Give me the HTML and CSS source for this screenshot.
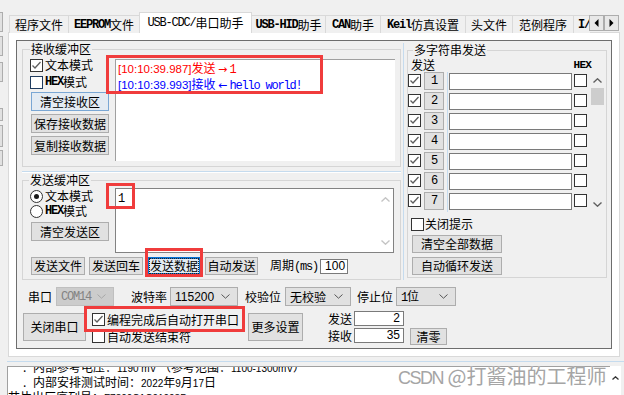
FILE: index.html
```html
<!DOCTYPE html>
<html lang="zh-CN">

<head>
    <meta charset="UTF-8">
    <title>USB-CDC/串口助手</title>
    <link rel="stylesheet" href="styles.css">
</head>

<body>

    <div class="app">
        <!-- 左侧被遮住的按钮边缘 -->
        <div class="edge">
            <div class="stub s1"></div>
            <div class="stub s2"></div>
            <div class="stub s3"></div>
            <div class="stub s4"></div>
            <div class="stub s5"></div>
            <div class="stub s6"></div>
        </div>

        <div class="main">
            <div class="tabs">
                <div class="tab t1">程序文件</div>
                <div class="tab t2"><span class="m b">EEPROM</span>文件</div>
                <div class="tab t3 active"><span class="m">USB-CDC/</span>串口助手</div>
                <div class="tab t4"><span class="m b">USB-HID</span>助手</div>
                <div class="tab t5"><span class="m b">CAN</span>助手</div>
                <div class="tab t6"><span class="m b">Keil</span>仿真设置</div>
                <div class="tab t7">头文件</div>
                <div class="tab t8">范例程序</div>
                <div class="tab t9"><span class="m b">I/</span></div>
                <div class="tab-arrows">
                    <span class="arr"><svg width="5" height="8" viewBox="0 0 5 8"><polygon points="4.5,0 4.5,8 0.5,4" fill="#000"/></svg></span>
                    <span class="arr"><svg width="5" height="8" viewBox="0 0 5 8"><polygon points="0.5,0 0.5,8 4.5,4" fill="#000"/></svg></span>
                </div>
            </div>

            <div class="panel">
                <div class="frame">
                    <div class="top">
                        <div class="left-col">
                            <fieldset class="grp recv">
                                <legend>接收缓冲区</legend>
                                <div class="grp-body">
                                    <div class="ctrls">
                                        <div class="chk-row r1">
                                            <span class="cb"><svg width="11" height="11" viewBox="0 0 11 11"><polyline points="1.5,5.5 4,8 9.5,2" fill="none" stroke="#5f5f5f" stroke-width="1.3"/></svg></span>文本模式
                                        </div>
                                        <div class="chk-row r2"><span class="cb hov"></span><span class="m b">HEX</span>模式</div>
                                        <div class="btn side-btn def">清空接收区</div>
                                        <div class="btn side-btn">保存接收数据</div>
                                        <div class="btn side-btn">复制接收数据</div>
                                    </div>
                                    <div class="recv-box">
                                        <div class="line red"><span class="ts">[10:10:39.987]</span>发送<span class="ar">→</span><span class="m">1</span></div>
                                        <div class="line blue"><span class="ts">[10:10:39.993]</span>接收<span class="ar">←</span><span class="m">hello world!</span></div>
                                    </div>
                                </div>
                            </fieldset>

                            <div class="hsep"></div>

                            <fieldset class="grp send">
                                <legend>发送缓冲区</legend>
                                <div class="grp-body">
                                    <div class="ctrls">
                                        <div class="chk-row r1"><span class="rb"><i></i></span>文本模式</div>
                                        <div class="chk-row r2"><span class="rb"></span><span class="m b">HEX</span>模式</div>
                                        <div class="btn side-btn">清空发送区</div>
                                    </div>
                                    <div class="send-box">
                                        <div class="send-text"><span class="m">1</span></div>
                                        <div class="dis-scroll">
                                            <svg width="9" height="5" viewBox="0 0 9 5"><polyline points="0.5,4.5 4.5,0.8 8.5,4.5" fill="none" stroke="#c4c4c4" stroke-width="1.4"/></svg>
                                            <svg width="9" height="5" viewBox="0 0 9 5"><polyline points="0.5,0.5 4.5,4.2 8.5,0.5" fill="none" stroke="#c4c4c4" stroke-width="1.4"/></svg>
                                        </div>
                                    </div>
                                </div>
                                <div class="send-bar">
                                    <div class="btn sb w54">发送文件</div>
                                    <div class="btn sb w54">发送回车</div>
                                    <div class="btn sb w54 focus"><span>发送数据</span></div>
                                    <div class="btn sb w53">自动发送</div>
                                    <span class="period">周期<span class="m">(ms)</span></span>
                                    <div class="period-in">100</div>
                                </div>
                            </fieldset>
                        </div>

                        <div class="vsep"></div>

                        <fieldset class="grp multi">
                            <legend>多字符串发送</legend>
                            <div class="multi-head">发送<span class="m b hex-h">HEX</span></div>
                            <div class="rows">
                                <div class="row-list">
                                    <div class="row"><span class="cb"><svg width="11" height="11" viewBox="0 0 11 11"><polyline points="1.5,5.5 4,8 9.5,2" fill="none" stroke="#5f5f5f" stroke-width="1.3"/></svg></span><div class="btn num"><span class="m">1</span></div><i class="vl"></i><div class="txt"></div><span class="cb hx"></span></div>
                                    <div class="row"><span class="cb"><svg width="11" height="11" viewBox="0 0 11 11"><polyline points="1.5,5.5 4,8 9.5,2" fill="none" stroke="#5f5f5f" stroke-width="1.3"/></svg></span><div class="btn num"><span class="m">2</span></div><i class="vl"></i><div class="txt"></div><span class="cb hx"></span></div>
                                    <div class="row"><span class="cb"><svg width="11" height="11" viewBox="0 0 11 11"><polyline points="1.5,5.5 4,8 9.5,2" fill="none" stroke="#5f5f5f" stroke-width="1.3"/></svg></span><div class="btn num"><span class="m">3</span></div><i class="vl"></i><div class="txt"></div><span class="cb hx"></span></div>
                                    <div class="row"><span class="cb"><svg width="11" height="11" viewBox="0 0 11 11"><polyline points="1.5,5.5 4,8 9.5,2" fill="none" stroke="#5f5f5f" stroke-width="1.3"/></svg></span><div class="btn num"><span class="m">4</span></div><i class="vl"></i><div class="txt"></div><span class="cb hx"></span></div>
                                    <div class="row"><span class="cb"><svg width="11" height="11" viewBox="0 0 11 11"><polyline points="1.5,5.5 4,8 9.5,2" fill="none" stroke="#5f5f5f" stroke-width="1.3"/></svg></span><div class="btn num"><span class="m">5</span></div><i class="vl"></i><div class="txt"></div><span class="cb hx"></span></div>
                                    <div class="row"><span class="cb"><svg width="11" height="11" viewBox="0 0 11 11"><polyline points="1.5,5.5 4,8 9.5,2" fill="none" stroke="#5f5f5f" stroke-width="1.3"/></svg></span><div class="btn num"><span class="m">6</span></div><i class="vl"></i><div class="txt"></div><span class="cb hx"></span></div>
                                    <div class="row"><span class="cb"><svg width="11" height="11" viewBox="0 0 11 11"><polyline points="1.5,5.5 4,8 9.5,2" fill="none" stroke="#5f5f5f" stroke-width="1.3"/></svg></span><div class="btn num"><span class="m">7</span></div><i class="vl"></i><div class="txt"></div><span class="cb hx"></span></div>
                                </div>
                                <div class="vscroll">
                                    <div class="vs-btn"><svg width="9" height="5" viewBox="0 0 9 5"><polyline points="0.5,4.5 4.5,0.8 8.5,4.5" fill="none" stroke="#606060" stroke-width="1.4"/></svg></div>
                                    <div class="thumb"></div>
                                    <div class="vs-btn vs-down"><svg width="9" height="5" viewBox="0 0 9 5"><polyline points="0.5,0.5 4.5,4.2 8.5,0.5" fill="none" stroke="#606060" stroke-width="1.4"/></svg></div>
                                </div>
                            </div>
                            <div class="tip"><span class="cb"></span>关闭提示</div>
                            <div class="btn mbtn">清空全部数据</div>
                            <div class="btn mbtn">自动循环发送</div>
                        </fieldset>
                    </div>

                    <div class="row1">
                        <span>串口</span>
                        <div class="sel dis sel-com"><span class="m">COM14</span><svg width="9" height="5" viewBox="0 0 9 5"><polyline points="0.5,0.5 4.5,4.2 8.5,0.5" fill="none" stroke="#a8a8a8"/></svg></div>
                        <span>波特率</span>
                        <div class="sel sel-baud"><span class="n">115200</span><svg width="9" height="5" viewBox="0 0 9 5"><polyline points="0.5,0.5 4.5,4.2 8.5,0.5" fill="none" stroke="#555"/></svg></div>
                        <span>校验位</span>
                        <div class="sel sel-par"><span>无校验</span><svg width="9" height="5" viewBox="0 0 9 5"><polyline points="0.5,0.5 4.5,4.2 8.5,0.5" fill="none" stroke="#555"/></svg></div>
                        <span>停止位</span>
                        <div class="sel sel-stop"><span><span class="m">1</span>位</span><svg width="9" height="5" viewBox="0 0 9 5"><polyline points="0.5,0.5 4.5,4.2 8.5,0.5" fill="none" stroke="#555"/></svg></div>
                    </div>

                    <div class="row2">
                        <div class="btn bigbtn close-btn">关闭串口</div>
                        <div class="opts">
                            <div class="opt"><span class="cb"><svg width="11" height="11" viewBox="0 0 11 11"><polyline points="1.5,5.5 4,8 9.5,2" fill="none" stroke="#5f5f5f" stroke-width="1.3"/></svg></span>编程完成后自动打开串口</div>
                            <div class="opt"><span class="cb"></span>自动发送结束符</div>
                        </div>
                        <div class="btn bigbtn more-btn">更多设置</div>
                        <div class="cnts">
                            <div class="cnt"><span class="cnt-l">发送</span><div class="cnt-in">2</div></div>
                            <div class="cnt"><span class="cnt-l">接收</span><div class="cnt-in">35</div></div>
                        </div>
                        <div class="btn clr-btn">清零</div>
                    </div>
                </div>
            </div>

            <div class="logsep"></div>
            <div class="log">
                <div class="log-box">
                    <div class="log-in">
                        <div class="log-line ind"><span class="dot">.</span>内部参考电压：<span class="n sm">1190 mV</span> （参考范围：<span class="n sm">1100-1300mV</span>）</div>
                        <div class="log-line ind"><span class="dot">.</span>内部安排测试时间：<span class="n sm">2022</span>年<span class="n sm">9</span>月<span class="n sm">17</span>日</div>
                        <div class="log-line">芯片出厂序列号：<span class="n sm">F7800C1C01003D</span></div>
                    </div>
                </div>
                <div class="log-scroll"><svg width="7" height="4" viewBox="0 0 7 4"><polyline points="0.5,3.5 3.5,0.8 6.5,3.5" fill="none" stroke="#333" stroke-width="1.3"/></svg></div>
            </div>
        </div>
    </div>

    <!-- 标注框 -->
    <div class="mark mk1"></div>
    <div class="mark mk2"></div>
    <div class="mark mk3"></div>
    <div class="mark mk4"></div>

    <div class="wm"><span class="wm-en">CSDN</span> @打酱油的工程师</div>

</body>

</html>
```

FILE: styles.css
```css
* {
    box-sizing: border-box;
}

html,
body {
    margin: 0;
    padding: 0;
}

body {
    position: relative;
    width: 624px;
    height: 395px;
    overflow: hidden;
    background: #f0f0f0;
    color: #000;
    font: 12px/14px "Noto Sans CJK SC", "Liberation Sans", sans-serif;
}

/* 等宽的英文小字 */
.m {
    font-family: "Liberation Mono", monospace;
    font-size: 12px;
    letter-spacing: -1.2px;
}

.b {
    font-weight: bold;
}

.n {
    font-family: "Liberation Sans", sans-serif;
}

.sm {
    font-size: 10px;
}

.app {
    display: flex;
}

.edge {
    width: 7px;
    flex: none;
}

.stub {
    width: 3px;
    background: #e1e1e1;
    border: 1px solid #adadad;
    border-left: none;
}

.s1 { margin-top: 12px; height: 20px; }
.s2 { margin-top: 4px; height: 20px; }
.s3 { margin-top: 6px; height: 20px; }
.s4 { margin-top: 26px; height: 13px; }
.s5 { margin-top: 4px; height: 22px; }
.s6 { margin-top: 3px; height: 16px; }

.main {
    width: 613px;
    flex: none;
}

/* 选项卡 */
.tabs {
    display: flex;
    align-items: flex-end;
    height: 33px;
    padding-left: 2px;
}

.tab {
    display: flex;
    align-items: center;
    justify-content: center;
    flex: none;
    height: 18px;
    margin-left: -1px;
    border: 1px solid #d9d9d9;
    border-bottom: none;
    background: #f0f0f0;
    white-space: nowrap;
    overflow: hidden;
}

.tab:first-child {
    margin-left: 0;
}

.tab.active {
    position: relative;
    z-index: 1;
    height: 21px;
    background: #fff;
}

.t1 { width: 60px; }
.t2 { width: 72px; }
.t3 { width: 113px; }
.t4 { width: 75px; }
.t5 { width: 56px; }
.t6 { width: 86px; }
.t7 { width: 48px; }
.t8 { width: 62px; }

.t9 {
    width: 17px;
    justify-content: flex-start;
    padding-left: 4px;
    border-right: none;
}

.tab-arrows {
    display: flex;
    flex: none;
    align-self: flex-start;
    margin: 15px 0 0 -1px;
}

.arr {
    display: flex;
    align-items: center;
    justify-content: center;
    width: 15px;
    height: 16px;
    border: 1px solid #adadad;
    background: #e8e8e8;
}

.panel {
    width: 612px;
    height: 325px;
    margin: -1px 0 0 1px;
    padding: 7px;
    background: #fff;
    border: 1px solid #d9d9d9;
}

.frame {
    width: 596px;
    height: 309px;
    border: 1px solid #6d6d6d;
    background: #f0f0f0;
}

.top {
    display: flex;
    height: 240px;
}

.left-col {
    width: 379px;
    margin-left: 5px;
    flex: none;
}

/* 分组框 */
.grp {
    margin: 0;
    padding: 0;
    min-width: 0;
    border: 1px solid #d5d5d5;
}

.grp legend {
    height: 14px;
    padding: 0 1px;
    line-height: 14px;
}

.grp-body {
    display: flex;
    align-items: flex-start;
    padding-left: 7px;
}

.recv {
    height: 125px;
    margin-top: 1px;
}

.recv legend {
    margin-left: 7px;
}

.ctrls {
    width: 80px;
    flex: none;
}

.chk-row {
    display: flex;
    align-items: center;
    height: 14px;
    white-space: nowrap;
}

.recv .r1 { margin-top: 2px; }
.recv .r2 { margin-top: 3px; }
.send .r1 { margin-top: 2px; }
.send .r2 { margin-top: 1px; }

.cb {
    display: flex;
    align-items: center;
    justify-content: center;
    flex: none;
    width: 13px;
    height: 13px;
    margin-right: 2px;
    border: 1px solid #333;
    background: #fff;
}

.cb.hov {
    border-color: #1f3b5e;
}

.rb {
    display: flex;
    align-items: center;
    justify-content: center;
    flex: none;
    width: 13px;
    height: 13px;
    margin-right: 2px;
    border: 1px solid #333;
    border-radius: 50%;
    background: #fff;
}

.rb i {
    width: 5px;
    height: 5px;
    border-radius: 50%;
    background: #1a1a1a;
}

.btn {
    display: flex;
    align-items: center;
    justify-content: center;
    flex: none;
    background: #e1e1e1;
    border: 1px solid #adadad;
    white-space: nowrap;
}

.btn.def {
    border-color: #7aa7d4;
    background: #e3ebf3;
}

.btn.focus {
    border: 2px solid #0a74d4;
    background: #e3ebf3;
}

.btn.focus span {
    outline: 1px dotted #222;
    outline-offset: 0;
}

.side-btn {
    width: 78px;
    height: 19px;
    margin: 3px 0 0 1px;
}

.send .side-btn {
    margin-top: 4px;
}

.recv-box {
    width: 280px;
    height: 102px;
    margin: 3px 0 0 5px;
    padding-left: 2px;
    background: #fff;
    border-top: 1px solid #a0a0a0;
    border-left: 1px solid #a0a0a0;
}

.line {
    height: 16px;
    line-height: 16px;
    white-space: nowrap;
}

.red { color: #f00; }
.blue { color: #00f; }

.ts {
    font-family: "Liberation Sans", sans-serif;
    font-size: 11.5px;
}

.ar {
    display: inline-block;
    width: 14px;
    text-align: center;
    font-family: "DejaVu Sans", sans-serif;
    font-size: 11px;
}

.hsep {
    height: 2px;
    margin-top: 4px;
    border-top: 1px solid #c5dbee;
    border-bottom: 1px solid #fff;
}

.send {
    height: 107px;
}

.send legend {
    margin-left: 6px;
}

.send-box {
    display: flex;
    width: 279px;
    height: 65px;
    margin: 1px 0 0 5px;
    background: #fff;
    border: 1px solid #828282;
}

.send-text {
    flex: 1;
    padding-left: 2px;
    line-height: 16px;
}

.dis-scroll {
    display: flex;
    flex-direction: column;
    justify-content: space-between;
    align-items: center;
    width: 16px;
    padding: 8px 0 7px;
}

.send-bar {
    display: flex;
    align-items: center;
    margin-top: 4px;
    padding-left: 8px;
    white-space: nowrap;
}

.sb {
    height: 18px;
    margin-right: 4px;
}

.w54 { width: 54px; }
.w53 { width: 53px; }

.period {
    margin-left: 8px;
}

.period-in {
    width: 28px;
    height: 15px;
    margin-left: 2px;
    padding-left: 4px;
    background: #fff;
    border: 1px solid #7a7a7a;
    font: 12px/13px "Liberation Sans", sans-serif;
}

.vsep {
    flex: none;
    width: 1px;
    height: 237px;
    margin: 2px 3px 0 2px;
    background: #c5dbee;
}

/* 多字符串发送 */
.multi {
    flex: none;
    width: 200px;
    height: 235px;
    margin-top: 2px;
}

.multi legend {
    margin-left: 5px;
}

.multi-head {
    display: flex;
    align-items: center;
    height: 15px;
    padding-left: 3px;
}

.hex-h {
    margin: 0 15px 0 auto;
    font-size: 11px;
    letter-spacing: -0.8px;
}

.rows {
    display: flex;
}

.row {
    display: flex;
    align-items: flex-start;
    height: 20px;
}

.row .cb {
    margin: 2px 3px 0 0;
}

.row .cb.hx {
    margin: 2px 0 0 2px;
}

.num {
    width: 20px;
    height: 18px;
}

.vl {
    width: 1px;
    height: 20px;
    margin-left: 3px;
    background: #c5dbee;
}

.txt {
    width: 123px;
    height: 17px;
    margin: 1px 0 0 1px;
    background: #fff;
    border: 1px solid #7a7a7a;
}

.vscroll {
    display: flex;
    flex-direction: column;
    align-items: center;
    width: 14px;
    height: 140px;
    margin-left: 3px;
    background: #f0f0f0;
}

.vs-btn {
    display: flex;
    align-items: center;
    justify-content: center;
    width: 14px;
    height: 16px;
}

.vs-down {
    margin-top: auto;
}

.thumb {
    width: 13px;
    height: 17px;
    background: #cdcdcd;
}

.tip {
    display: flex;
    align-items: center;
    height: 14px;
    margin-top: 5px;
    padding-left: 3px;
}

.tip .cb {
    margin-right: 1px;
}

.mbtn {
    width: 90px;
    height: 18px;
    margin: 4px 0 0 4px;
}

/* 底部串口设置 */
.row1 {
    display: flex;
    align-items: center;
    height: 19px;
    margin-top: 6px;
    padding-left: 11px;
    white-space: nowrap;
}

.sel {
    display: flex;
    align-items: center;
    flex: none;
    height: 19px;
    padding-left: 4px;
    background: #e1e1e1;
    border: 1px solid #adadad;
}

.sel svg {
    margin: 0 7px 0 auto;
}

.sel.dis {
    background: #cccccc;
    border-color: #bfbfbf;
    color: #838383;
}

.sel-com { width: 58px; margin: 0 17px 0 4px; }
.sel-baud { width: 68px; margin: 0 7px 0 3px; }
.sel-par { width: 66px; margin: 0 6px 0 4px; }
.sel-stop { width: 60px; margin-left: 3px; }

.row2 {
    display: flex;
    align-items: flex-start;
    height: 41px;
}

.bigbtn {
    height: 28px;
    margin-top: 7px;
}

.close-btn {
    width: 63px;
    margin-left: 6px;
}

.opts {
    width: 150px;
    margin: 7px 0 0 6px;
}

.opt {
    display: flex;
    align-items: center;
    height: 13px;
    white-space: nowrap;
}

.opt + .opt {
    margin-top: 4px;
}

.more-btn {
    width: 55px;
    margin-left: 6px;
}

.cnts {
    margin: 5px 0 0 25px;
}

.cnt {
    display: flex;
    align-items: center;
    height: 15px;
}

.cnt + .cnt {
    margin-top: 2px;
}

.cnt-l {
    width: 26px;
}

.cnt-in {
    width: 50px;
    height: 15px;
    padding-right: 3px;
    background: #fff;
    border: 1px solid #7a7a7a;
    text-align: right;
    font: 12px/13px "Liberation Sans", sans-serif;
}

.clr-btn {
    width: 37px;
    height: 17px;
    margin: 22px 0 0 6px;
}

/* 下方日志 */
.logsep {
    width: 617px;
    height: 1px;
    margin-top: 4px;
    background: #c5dbee;
}

.log {
    display: flex;
    width: 617px;
    margin-top: 4px;
}

.log-box {
    width: 603px;
    height: 40px;
    overflow: hidden;
    background: #fff;
    border-top: 1px solid #a0a0a0;
    border-left: 1px solid #a0a0a0;
}

.log-in {
    margin-top: -8px;
}

.log-line {
    height: 15px;
    line-height: 15px;
    white-space: nowrap;
}

.ind {
    padding-left: 15px;
}

.dot {
    display: inline-block;
    width: 10px;
}

.log-scroll {
    display: flex;
    justify-content: center;
    width: 11px;
    height: 40px;
    padding-top: 10px;
    background: #fff;
}

/* 红色标注框 */
.mark {
    position: absolute;
    border: 3px solid #f03c3c;
}

.mk1 { left: 106px; top: 55px; width: 217px; height: 39px; }
.mk2 { left: 106px; top: 183px; width: 29px; height: 26px; }
.mk3 { left: 145px; top: 248px; width: 58px; height: 29px; }
.mk4 { left: 84px; top: 306px; width: 161px; height: 26px; }

.wm {
    position: absolute;
    left: 398px;
    top: 365px;
    color: #a5a5a5;
    font-size: 20px;
    line-height: 22px;
    white-space: nowrap;
    text-shadow: 0 0 1px #fff;
}

.wm-en {
    font-family: "Liberation Sans", sans-serif;
    font-size: 18px;
    letter-spacing: -1.5px;
}
```
